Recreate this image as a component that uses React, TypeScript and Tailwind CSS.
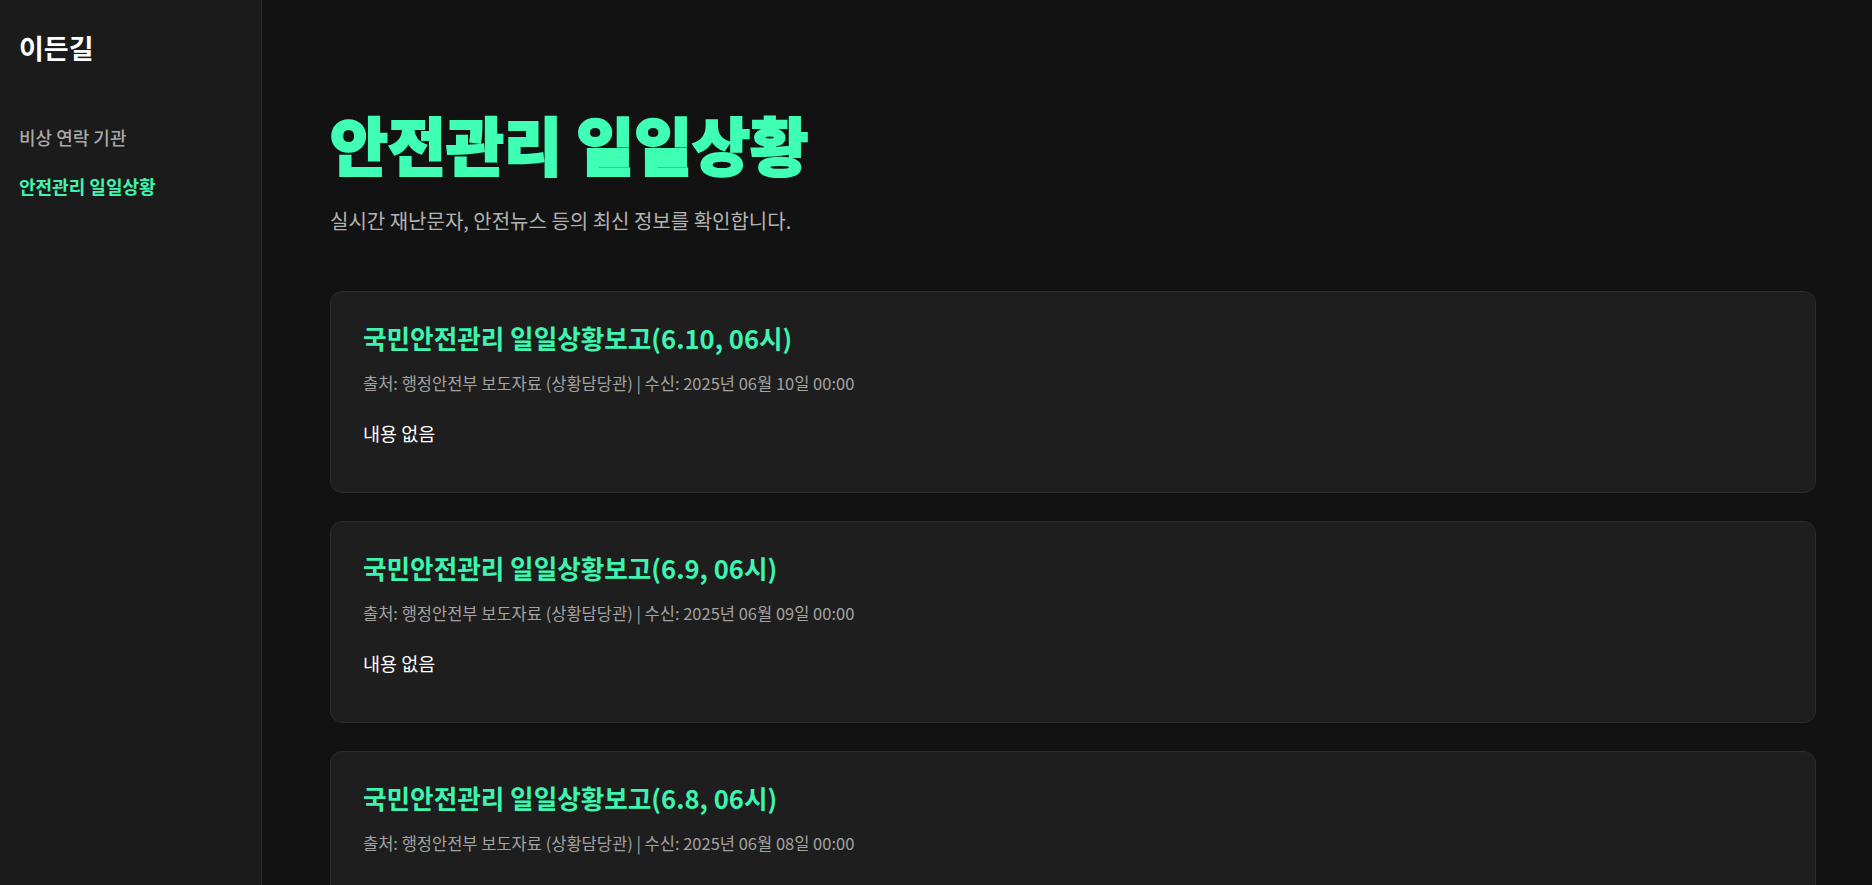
const reports = [
  { title: "국민안전관리 일일상황보고(6.10, 06시)", date: "2025년 06월 10일 00:00" },
  { title: "국민안전관리 일일상황보고(6.9, 06시)", date: "2025년 06월 09일 00:00" },
  { title: "국민안전관리 일일상황보고(6.8, 06시)", date: "2025년 06월 08일 00:00" },
  { title: "국민안전관리 일일상황보고(6.7, 06시)", date: "2025년 06월 07일 00:00" },
];

const navItems = [
  { label: "비상 연락 기관", active: false },
  { label: "안전관리 일일상황", active: true },
];

export default function App() {
  return (
    <div
      className="flex h-[885px] overflow-hidden bg-[#121212] text-white"
      style={{ fontFamily: '"Noto Sans CJK KR", "Noto Sans", sans-serif' }}
    >
      {/* Sidebar */}
      <aside className="w-[262px] shrink-0 border-r border-[#2b2b2b] bg-[#1b1b1b] pl-[19px] pr-5 pt-[30px]">
        <div className="text-[27px] leading-9 font-bold text-white">이든길</div>
        <nav className="mt-[57px] flex flex-col gap-[21px]">
          {navItems.map((item) => (
            <a
              key={item.label}
              href="#"
              className={
                item.active
                  ? "text-lg leading-7 font-bold text-[#3df5b0]"
                  : "text-lg leading-7 font-medium text-[#a8a8a8]"
              }
            >
              {item.label}
            </a>
          ))}
        </nav>
      </aside>

      {/* Main */}
      <main className="flex-1 pl-[68px] pr-[56px] pt-[105px]">
        <h1 className="text-[63px] leading-[76px] font-black text-[#3effb4] [-webkit-text-stroke:2px_#3effb4]">
          안전관리 일일상황
        </h1>
        <p className="mt-[26px] text-xl leading-7 text-[#b3b3b3]">
          실시간 재난문자, 안전뉴스 등의 최신 정보를 확인합니다.
        </p>

        <div className="mt-[56px] flex flex-col gap-7">
          {reports.map((r) => (
            <div
              key={r.title}
              className="rounded-xl border border-[#2c2c2c] bg-[#1e1e1e] px-8 pt-7 pb-[45px]"
            >
              <h2 className="text-[25.6px] leading-9 font-bold text-[#3df5b0]">{r.title}</h2>
              <p className="mt-[15px] text-[16.5px] leading-6 text-[#a3a3a3]">
                출처: 행정안전부 보도자료 (상황담당관) | 수신: {r.date}
              </p>
              <p className="mt-[24px] text-[18.5px] leading-7 text-white">내용 없음</p>
            </div>
          ))}
        </div>
      </main>
    </div>
  );
}
